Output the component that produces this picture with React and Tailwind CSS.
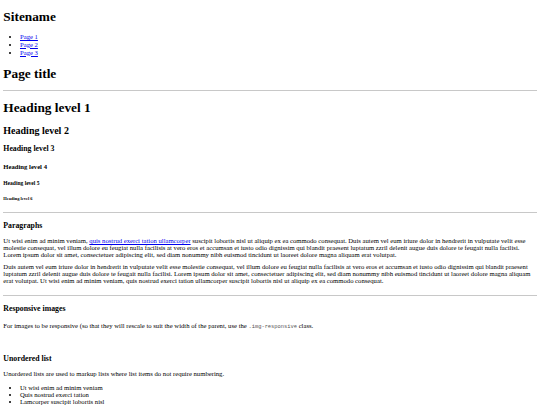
const navLinks = ["Page 1", "Page 2", "Page 3"];

function Rule({ className = "" }) {
  return (
    <hr className={`my-[0.5em] border-0 border-t border-[#c8c8c8] ${className}`} />
  );
}

export default function App() {
  return (
    <div className="bg-white text-black min-h-screen px-[3.33px] pb-[3.33px] text-[6.667px] leading-[1.05] [font-family:'Liberation_Serif',serif]">
      <header>
        <h1 className="text-[2em] leading-[1.15] font-bold my-[0.67em]">Sitename</h1>
        <ul className="list-disc pl-[16.67px] my-[1em] leading-[1.15]">
          {navLinks.map((l) => (
            <li key={l}>
              <a href="#" className="text-[#0000ee] underline">
                {l}
              </a>
            </li>
          ))}
        </ul>
        <h1 className="text-[2em] leading-[1.15] font-bold mt-[10px] mb-[0.67em]">Page title</h1>
      </header>
      <Rule />

      <section>
        <h1 className="text-[2em] leading-[1.15] font-bold mt-[0.67em] mb-[9.5px]">
          Heading level 1
        </h1>
        <h2 className="text-[1.5em] leading-[1.15] font-bold my-[0.83em]">Heading level 2</h2>
        <h3 className="text-[1.17em] leading-[1.15] font-bold my-[1em]">Heading level 3</h3>
        <h4 className="text-[1em] leading-[1.15] font-bold my-[1.33em]">Heading level 4</h4>
        <h5 className="text-[0.83em] leading-[1.15] font-bold my-[1.67em]">Heading level 5</h5>
        <h6 className="text-[0.67em] leading-[1.15] font-bold mt-[2.33em] mb-[2.4em]">
          Heading level 6
        </h6>
      </section>
      <Rule className="mb-[9px]" />

      <section>
        <h3 className="text-[1.17em] leading-[1.15] font-bold mt-[1em] mb-[6px]">Paragraphs</h3>
        <p className="mt-[6px] mb-[5px]">
          Ut wisi enim ad minim veniam,{" "}
          <a href="#" className="text-[#0000ee] underline">
            quis nostrud exerci tation ullamcorper
          </a>{" "}
          suscipit lobortis nisl ut aliquip ex ea commodo consequat. Duis autem
          vel eum iriure dolor in hendrerit in vulputate velit esse molestie
          consequat, vel illum dolore eu feugiat nulla facilisis at vero eros et
          accumsan et iusto odio dignissim qui blandit praesent luptatum zzril
          delenit augue duis dolore te feugait nulla facilisi. Lorem ipsum dolor
          sit amet, consectetuer adipiscing elit, sed diam nonummy nibh euismod
          tincidunt ut laoreet dolore magna aliquam erat volutpat.
        </p>
        <p className="mt-[5px] mb-[11px]">
          Duis autem vel eum iriure dolor in hendrerit in vulputate velit esse
          molestie consequat, vel illum dolore eu feugiat nulla facilisis at vero
          eros et accumsan et iusto odio dignissim qui blandit praesent luptatum
          zzril delenit augue duis dolore te feugait nulla facilisi. Lorem ipsum
          dolor sit amet, consectetuer adipiscing elit, sed diam nonummy nibh
          euismod tincidunt ut laoreet dolore magna aliquam erat volutpat. Ut
          wisi enim ad minim veniam, quis nostrud exerci tation ullamcorper
          suscipit lobortis nisl ut aliquip ex ea commodo consequat.
        </p>
      </section>
      <Rule className="mt-0 mb-[9px]" />

      <section>
        <h3 className="text-[1.17em] leading-[1.15] font-bold my-[1em]">Responsive images</h3>
        <p className="my-[1em]">
          For images to be responsive (so that they will rescale to suit the
          width of the parent, use the{" "}
          <code className="text-[5.4px] text-[#555] [font-family:'Liberation_Mono',monospace]">
            .img-responsive
          </code>{" "}
          class.
        </p>
        <div className="h-[10px]" />
      </section>

      <section>
        <h3 className="text-[1.17em] leading-[1.15] font-bold mt-[1em] mb-[6px]">
          Unordered list
        </h3>
        <p className="mt-[6px] mb-[1em]">
          Unordered lists are used to markup lists where list items do not
          require numbering.
        </p>
        <ul className="list-disc pl-[16.67px] my-[1em]">
          <li>Ut wisi enim ad minim veniam</li>
          <li>Quis nostrud exerci tation</li>
          <li>Lamcorper suscipit lobortis nisl</li>
          <li>Ut aliquip ex ea commodo consequat</li>
        </ul>
      </section>
    </div>
  );
}
